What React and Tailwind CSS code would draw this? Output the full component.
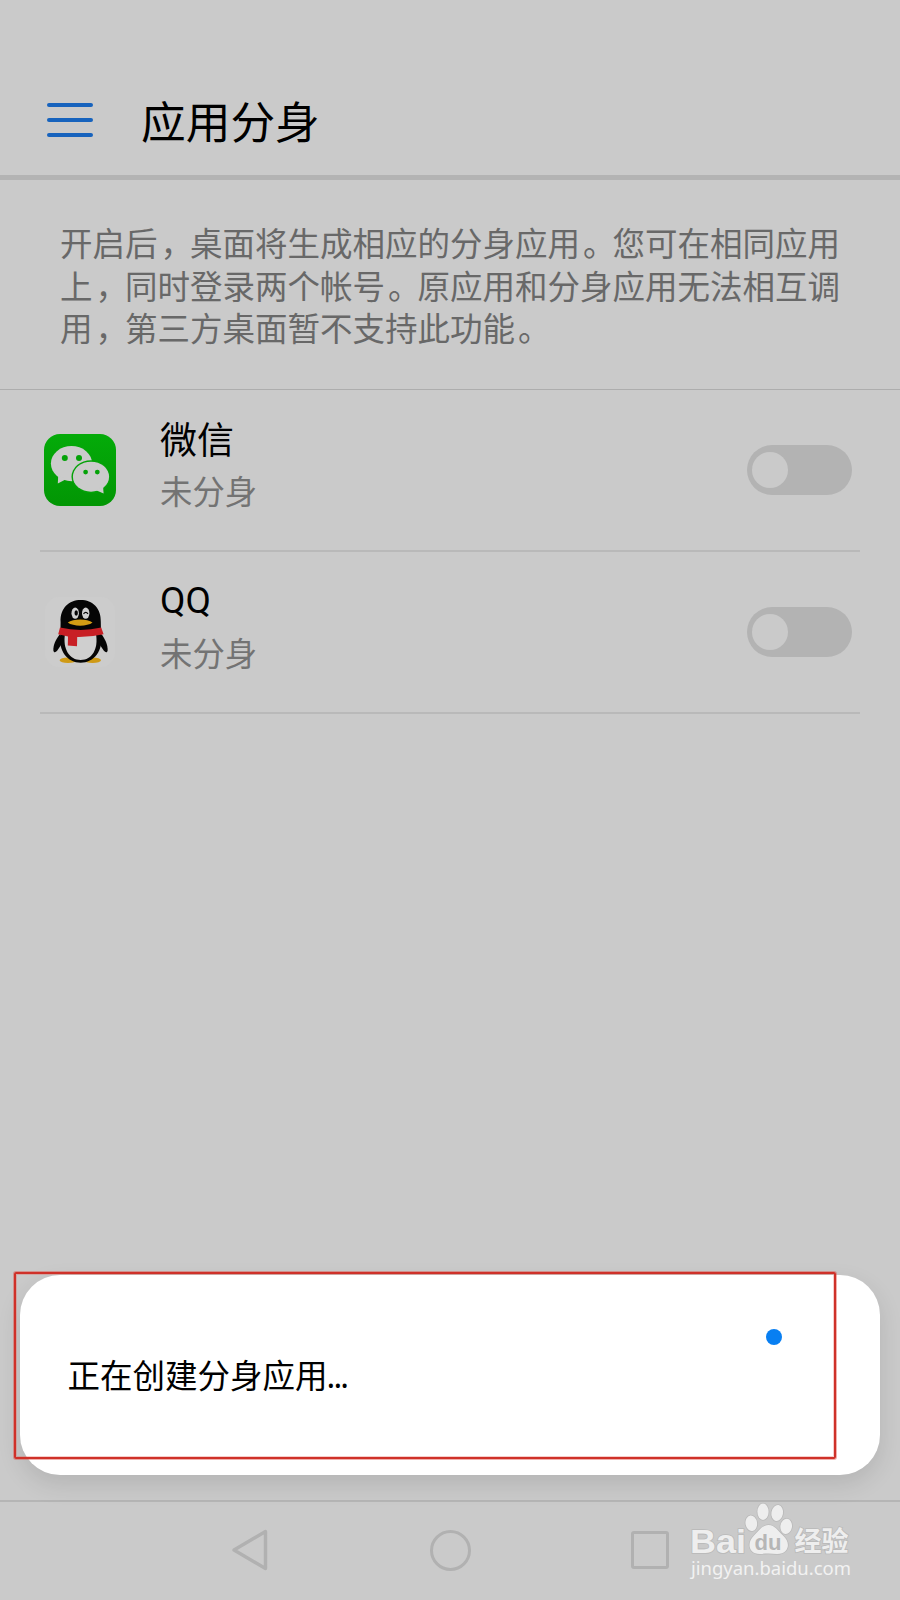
const apps = [
  { id: 'wechat', name: '微信', nameClass: 'pt-0.5 leading-[50px]', status: '未分身', Icon: WeChatIcon },
  { id: 'qq', name: 'QQ', nameClass: 'font-[Roboto,sans-serif] leading-[52px]', status: '未分身', Icon: QQIcon }
]

const hints = [
  '开启后，桌面将生成相应的分身应用。您可在相同应用',
  '上，同时登录两个帐号。原应用和分身应用无法相互调',
  '用，第三方桌面暂不支持此功能。'
]

function WeChatIcon() {
  return (
    <svg viewBox="0 0 72 72" className="size-[72px] shrink-0">
      <defs>
        <linearGradient id="wechatGreen" x1="0" y1="0" x2="0" y2="1">
          <stop offset="0" stopColor="#04ab09" />
          <stop offset="1" stopColor="#029604" />
        </linearGradient>
      </defs>
      <rect width="72" height="72" rx="16" fill="url(#wechatGreen)" />
      <g fill="#cbcbcb">
        <ellipse cx="27.5" cy="29.6" rx="20.6" ry="17.6" />
        <path d="M14.2 42 L13.8 49.6 L22.5 45 Z" />
      </g>
      <g fill="#04a208">
        <circle cx="20.8" cy="24" r="3" />
        <circle cx="35" cy="24" r="3" />
      </g>
      <ellipse cx="47" cy="42.7" rx="19.5" ry="16.5" fill="#04a208" />
      <g fill="#cbcbcb">
        <ellipse cx="47" cy="42.7" rx="18.1" ry="15" />
        <path d="M59 52 L59.6 59.4 L51.5 56 Z" />
      </g>
      <g fill="#04a208">
        <circle cx="41.6" cy="38.1" r="2.4" />
        <circle cx="53.3" cy="38.1" r="2.4" />
      </g>
    </svg>
  )
}

function QQIcon() {
  return (
    <svg viewBox="0 0 72 72" className="size-[72px] shrink-0">
      <rect x="1" y="1" width="70" height="70" rx="14" fill="#cccccc" />
      <ellipse cx="24" cy="64.2" rx="8.4" ry="2.8" fill="#cf9a16" />
      <ellipse cx="48.6" cy="64.2" rx="8.4" ry="2.8" fill="#cf9a16" />
      <path d="M16 38 C12 43 9 49 9.4 54.5 C9.8 57.5 12 56.5 14 53.5 L19 46 Z" fill="#050505" />
      <path d="M57.5 38 C61 43 64 49 63.6 54.5 C63.2 57.5 61 56.5 59 53.5 L54 46 Z" fill="#050505" />
      <path d="M16.6 26 C16 12 25 4 36.7 4 C48.5 4 57.3 12 56.8 26 L57 38 C59.5 55 50 66.7 36.7 66.7 C23.5 66.7 14 55 16.4 38 Z" fill="#050505" />
      <path d="M21 38 L52 38 C54.5 53 48 64 36.6 64 C25.5 64 18.5 53 21 38 Z" fill="#cfcfcf" />
      <ellipse cx="31.2" cy="17.2" rx="3.7" ry="5.6" fill="#d0d0d0" />
      <ellipse cx="41.7" cy="17.2" rx="3.7" ry="5.6" fill="#d0d0d0" />
      <ellipse cx="32.2" cy="17" rx="1.7" ry="2.7" fill="#050505" />
      <path d="M39.5 17.8 Q41.8 14.8 44 17.8" fill="none" stroke="#050505" strokeWidth="1.2" />
      <path d="M23.8 26.6 C29 22.4 43.5 22.4 48.5 26.6 C43.5 30.8 29 30.8 23.8 26.6 Z" fill="#d49d14" />
      <path d="M16 31.6 Q36.7 36.5 57.2 31.6 L59.6 38.3 Q47 41.2 33.2 41 L33 50.2 L23.8 49.5 L24 40.4 L14.2 38.2 Z" fill="#c81f25" />
    </svg>
  )
}

function Toggle() {
  return (
    <button className="flex h-[50px] w-[105px] items-center rounded-full bg-[#b3b3b3] pl-[5px]">
      <span className="size-9 rounded-full bg-[#cacaca]" />
    </button>
  )
}

function AppRow({ app }) {
  const { name, nameClass, status, Icon } = app
  return (
    <li className="mx-10 flex h-[162px] items-center border-b-2 border-[#b9b9b9] pr-2 pl-1">
      <Icon />
      <div className="ml-[44px] flex-1 pb-[10px]">
        <div className={`text-[37px] text-black ${nameClass}`}>{name}</div>
        <div className="text-[32.4px] leading-[52px] text-[#737373]">{status}</div>
      </div>
      <Toggle />
    </li>
  )
}

// punctuation sits a little further right than the font places it
function HintLine({ text }) {
  return (
    <p>
      {text.split(/([，。])/).map((part, i) =>
        part === '，' || part === '。' ? (
          <span key={i} className="ml-[3px] -mr-[3px]">{part}</span>
        ) : (
          part
        )
      )}
    </p>
  )
}

function Watermark() {
  return (
    <div className="absolute top-[1500px] left-[688px] h-[90px] w-[170px]">
      <svg viewBox="688 1500 170 90" className="h-[90px] w-[170px]">
        <g fill="#eeeeee" stroke="#b9b9b9" strokeWidth="1.6" paintOrder="stroke">
          <text x="690" y="1552.5" fontSize="34" fontWeight="700" fontFamily="Liberation Sans, sans-serif" textLength="56" lengthAdjust="spacingAndGlyphs">Bai</text>
          <ellipse cx="751.3" cy="1523.3" rx="5.8" ry="7.8" transform="rotate(-8 751.3 1523.3)" />
          <ellipse cx="763" cy="1511.8" rx="5.6" ry="8.2" />
          <ellipse cx="777.2" cy="1513" rx="5.8" ry="8" transform="rotate(10 777.2 1513)" />
          <ellipse cx="786.2" cy="1526.4" rx="5.8" ry="7.6" transform="rotate(8 786.2 1526.4)" />
          <path d="M768.5 1525 C775 1525 778 1531 783 1535.5 C788 1540 789.5 1546 786 1550.5 C782 1555.5 775 1553.5 768.5 1553.5 C762 1553.5 755 1555.5 751.3 1550.5 C748 1546 749.5 1540 754 1535.5 C759 1531 762 1525 768.5 1525 Z" />
          <text x="794.5" y="1550.5" fontSize="27" fontWeight="700" fontFamily="Noto Sans CJK SC, sans-serif">经验</text>
        </g>
        <text x="754.5" y="1549.5" fontSize="21.5" fontWeight="700" fontFamily="Liberation Sans, sans-serif" fill="#b6b6b6" textLength="27" lengthAdjust="spacingAndGlyphs">du</text>
        <text x="691" y="1574.5" fontSize="18.5" fontFamily="Noto Sans, sans-serif" fill="#f2f2f2" textLength="160">jingyan.baidu.com</text>
      </svg>
    </div>
  )
}

export default function App() {
  return (
    <div className="relative flex h-[1600px] w-[900px] flex-col overflow-hidden bg-[#cacaca] font-['Noto_Sans','Noto_Sans_CJK_SC',sans-serif]">
      <header className="flex h-[180px] items-center border-b-[5px] border-[#b3b3b3] pt-[65px] pl-[47px]">
        <button className="flex w-[45.5px] flex-col gap-[11px]">
          <span className="h-1 rounded-full bg-[#1763bd]" />
          <span className="h-1 rounded-full bg-[#1763bd]" />
          <span className="h-1 rounded-full bg-[#1763bd]" />
        </button>
        <h1 className="ml-[48.5px] pt-[3px] text-[44.7px] leading-[60px] text-black">应用分身</h1>
      </header>

      <div className="h-[210px] border-b border-[#adadad] pt-[43px] pl-[60px] text-[32.5px] leading-[42.5px] whitespace-nowrap text-[#686868]">
        {hints.map((text) => (
          <HintLine key={text} text={text} />
        ))}
      </div>

      <ul>
        {apps.map((app) => (
          <AppRow key={app.id} app={app} />
        ))}
      </ul>

      <nav className="mt-auto flex h-[100px] items-center justify-between border-t-2 border-[#b5b5b5] pr-[231px] pb-[2px] pl-[231px]">
        <svg width="38" height="42" viewBox="0 0 38 42" fill="none" stroke="#b1b1b1" strokeWidth="3.4" strokeLinejoin="round">
          <path d="M34.5 2.5 V39.5 L3 21 Z" />
        </svg>
        <span className="size-[41px] rounded-full border-[3px] border-[#b1b1b1]" />
        <span className="size-[38px] rounded-[3px] border-[3px] border-[#b1b1b1]" />
      </nav>

      <div className="absolute top-[1275px] left-5 flex h-[200px] w-[860px] items-center rounded-[40px] bg-white pt-[3px] pl-[47.5px] shadow-[0_9px_24px_rgba(0,0,0,0.11)]">
        <span className="text-[32.5px] text-black">
          正在创建分身应用<span className="-ml-px tracking-[-1.8px]">...</span>
        </span>
        <span className="absolute top-[54px] left-[746px] size-4 rounded-full bg-[#087ff2]" />
      </div>
      <div className="absolute top-[1272px] left-[14px] h-[187px] w-[822px] rounded-[2px] border-2 border-[#cf3129] shadow-[0_0_0_1px_rgba(225,80,70,0.45),inset_0_0_0_1px_rgba(230,90,80,0.3)]" />

      <Watermark />
    </div>
  )
}
